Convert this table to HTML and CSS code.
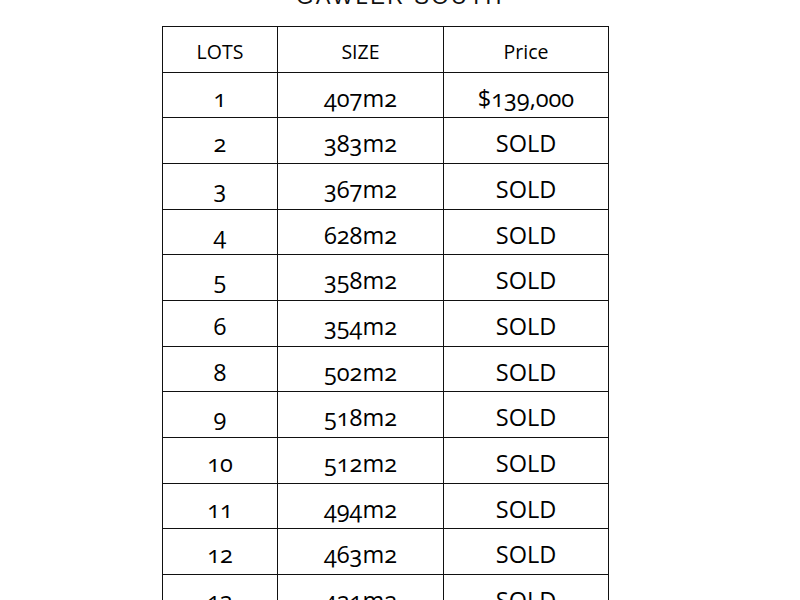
FILE: index.html
```html
<!DOCTYPE html>
<html>
<head>
<meta charset="utf-8">
<link rel="stylesheet" href="styles.css">
</head>
<body>
<div class="page">
  <h1 class="title">GAWLER SOUTH</h1>
  <table class="lots">
    <colgroup><col class="c1"><col class="c2"><col class="c3"></colgroup>
    <thead>
      <tr><th>LOTS</th><th>SIZE</th><th>Price</th></tr>
    </thead>
    <tbody>
      <tr><td>1</td><td>407m2</td><td>$139,000</td></tr>
      <tr><td>2</td><td>383m2</td><td>SOLD</td></tr>
      <tr><td>3</td><td>367m2</td><td>SOLD</td></tr>
      <tr><td>4</td><td>628m2</td><td>SOLD</td></tr>
      <tr><td>5</td><td>358m2</td><td>SOLD</td></tr>
      <tr><td>6</td><td>354m2</td><td>SOLD</td></tr>
      <tr><td>8</td><td>502m2</td><td>SOLD</td></tr>
      <tr><td>9</td><td>518m2</td><td>SOLD</td></tr>
      <tr><td>10</td><td>512m2</td><td>SOLD</td></tr>
      <tr><td>11</td><td>494m2</td><td>SOLD</td></tr>
      <tr><td>12</td><td>463m2</td><td>SOLD</td></tr>
      <tr><td>13</td><td>421m2</td><td>SOLD</td></tr>
    </tbody>
  </table>
</div>
</body>
</html>
```

FILE: styles.css
```css
html, body {
  margin: 0;
  padding: 0;
  background: #fff;
  overflow: hidden;
}
.page {
  width: 800px;
  height: 600px;
  overflow: hidden;
}
.title {
  margin: -14px 0 0 0;
  text-align: center;
  font-family: "Liberation Sans", Arial, sans-serif;
  font-weight: normal;
  font-size: 22px;
  line-height: 22px;
  letter-spacing: 2.5px;
  color: #111;
}
.lots {
  margin: 18px 0 0 162px;
  border-collapse: collapse;
  table-layout: fixed;
  width: 446px;
  font-family: "Open Sans", "Lato", sans-serif;
  font-variant-numeric: oldstyle-nums;
  color: #000;
}
.c1 { width: 115px; }
.c2 { width: 166px; }
.c3 { width: 165px; }
.lots tr {
  height: 45.67px;
}
.lots th, .lots td {
  box-sizing: border-box;
  border: 1px solid #111;
  text-align: center;
  vertical-align: middle;
  padding: 4px 0 0 0;
  line-height: 1;
}
.lots th {
  font-weight: 500;
  font-size: 19.5px;
}
.lots td {
  font-weight: 500;
  font-size: 23.5px;
  padding-top: 7px;
}
```
